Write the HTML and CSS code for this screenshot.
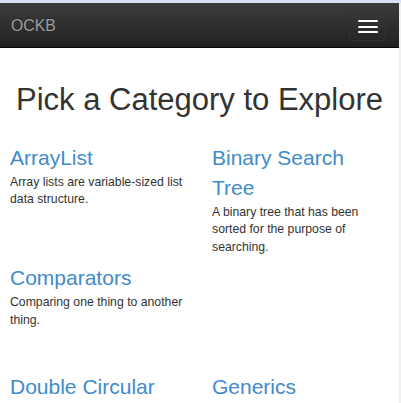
FILE: index.html
```html
<!DOCTYPE html>
<html lang="en">
<head>
<meta charset="utf-8">
<title>OCKB</title>
<link rel="stylesheet" href="styles.css">
</head>
<body>
<div class="topbar"></div>
<div class="frame">
  <div class="page">
    <nav class="navbar">
      <a class="brand" href="#">OCKB</a>
      <button class="toggle" type="button" aria-label="Toggle navigation">
        <span class="bar"></span>
        <span class="bar"></span>
        <span class="bar"></span>
      </button>
    </nav>
    <main class="content">
      <h1 class="title">Pick a Category to Explore</h1>
      <div class="grid">
        <div class="item">
          <h3 class="item-title"><a href="#">ArrayList</a></h3>
          <p class="item-desc">Array lists are variable-sized list data structure.</p>
        </div>
        <div class="item">
          <h3 class="item-title"><a href="#">Binary Search Tree</a></h3>
          <p class="item-desc">A binary tree that has been sorted for the purpose of searching.</p>
        </div>
        <div class="item">
          <h3 class="item-title"><a href="#">Comparators</a></h3>
          <p class="item-desc">Comparing one thing to another thing.</p>
        </div>
        <div class="item item-newrow">
          <h3 class="item-title"><a href="#">Double Circular Linked List</a></h3>
          <p class="item-desc">A linked list whose ends connect to each other in both directions.</p>
        </div>
        <div class="item">
          <h3 class="item-title"><a href="#">Generics</a></h3>
          <p class="item-desc">Writing code that works with many types.</p>
        </div>
      </div>
    </main>
  </div>
  <div class="edge"></div>
</div>
</body>
</html>
```
FILE: styles.css
```css
html, body {
  margin: 0;
  padding: 0;
  height: 100%;
  overflow: hidden;
}

body {
  background: #fff;
  color: #333;
  font-family: "Liberation Sans", Arial, sans-serif;
  font-size: 12.25px;
  line-height: 17.5px;
}

.topbar {
  height: 3px;
  background: #d5e3f3;
}

.frame {
  display: flex;
  min-height: calc(100% - 3px);
}

.page {
  flex: 1;
  min-width: 0;
}

.edge {
  width: 2px;
  background: #f0f0f0;
}

.navbar {
  display: flex;
  justify-content: space-between;
  align-items: center;
  height: 44px;
  padding: 0 13px 0 11px;
  background: linear-gradient(to bottom, #3c3c3c 0%, #222 100%);
  border-bottom: 1px solid #080808;
}

.brand {
  color: #9d9d9d;
  font-size: 15.75px;
  line-height: 1;
  text-decoration: none;
  text-shadow: 0 -1px 0 rgba(0, 0, 0, 0.25);
  margin-top: 2px;
}

.toggle {
  align-self: flex-start;
  margin-top: 9px;
  box-sizing: border-box;
  width: 37px;
  height: 29px;
  padding: 0;
  border: 1px solid #333;
  border-radius: 4px;
  background: transparent;
  display: flex;
  flex-direction: column;
  align-items: center;
  justify-content: center;
  gap: 3.25px;
}

.bar {
  display: block;
  width: 20px;
  height: 2px;
  border-radius: 1px;
  background: #fff;
}

.content {
  padding: 0 0 0 10px;
}

.title {
  margin: 35px 0 25.7px -10px;
  font-size: 31px;
  line-height: 1.1;
  font-weight: normal;
  text-align: center;
  color: #333;
}

.grid {
  display: grid;
  grid-template-columns: 178px 178px;
  column-gap: 24px;
}

.item {
  min-height: 109px;
}

.item-newrow {
  grid-column: 1;
}

.item-title {
  margin: 0;
  font-size: 21px;
  line-height: 30px;
  font-weight: normal;
}

.item-title a {
  color: #428bca;
  text-decoration: none;
}

.item-desc {
  margin: 1px 0 7px;
}
```
